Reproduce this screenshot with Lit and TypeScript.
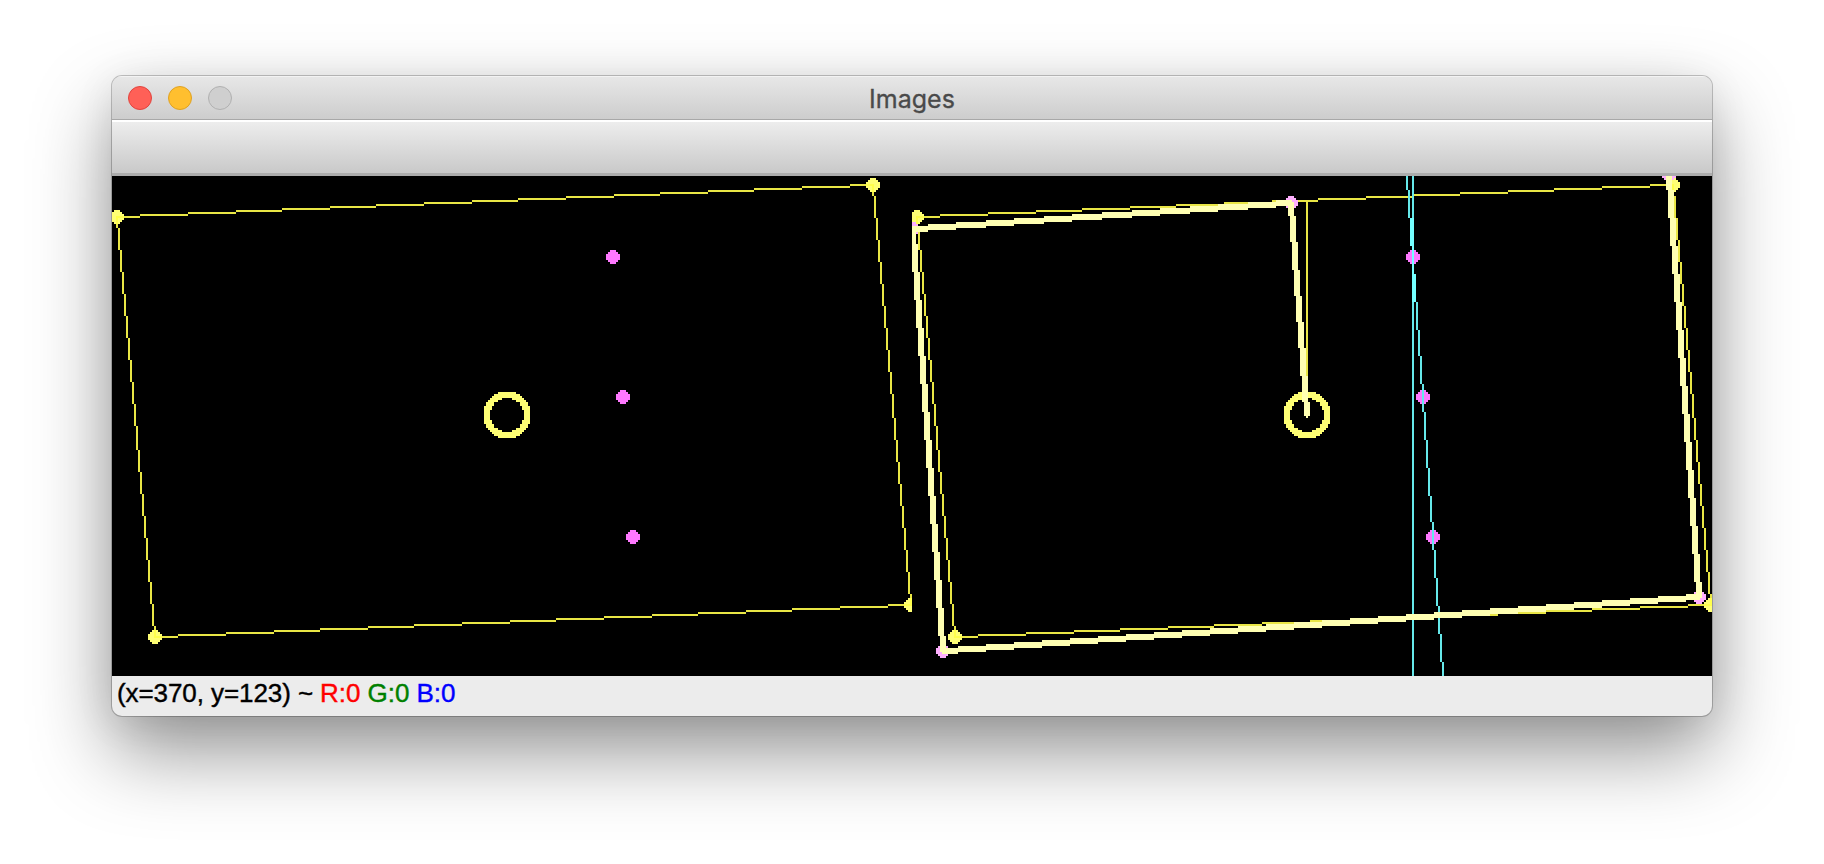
import { LitElement, html, css, svg } from "lit";
import { customElement } from "lit/decorators.js";

type Point = [number, number];

const WIDTH = 800;
const HEIGHT = 250;

/** Horizontal run of cells, clipped to the image between minX and maxX. */
function run(x: number, y: number, w: number, minX = 0, maxX = WIDTH): string {
  const a = Math.max(x, minX);
  const b = Math.min(x + w, maxX);
  if (b <= a || y < 0 || y >= HEIGHT) return "";
  return `M${a} ${y}h${b - a}v1h${a - b}z`;
}

/** One cell wide line. */
function line([x0, y0]: Point, [x1, y1]: Point, minX = 0, maxX = WIDTH): string {
  const steps = Math.max(Math.abs(x1 - x0), Math.abs(y1 - y0));
  let d = "";
  for (let i = 0; i <= steps; i++) {
    const x = Math.floor(x0 + ((x1 - x0) * i) / steps + 0.5);
    const y = Math.floor(y0 + ((y1 - y0) * i) / steps + 0.5);
    d += run(x, y, 1, minX, maxX);
  }
  return d;
}

/** Three cells wide line with small caps on both ends. */
function thick([x0, y0]: Point, [x1, y1]: Point): string {
  const steep = Math.abs(y1 - y0) > Math.abs(x1 - x0);
  let d = "";
  for (const k of [-1, 0, 1]) {
    d += steep
      ? line([x0 + k, y0], [x1 + k, y1], 400)
      : line([x0, y0 + k], [x1, y1 + k], 400);
  }
  for (const [x, y] of [[x0, y0], [x1, y1]]) {
    d += run(x, y - 1, 1, 400) + run(x - 1, y, 3, 400) + run(x, y + 1, 1, 400);
  }
  return d;
}

function dot([cx, cy]: Point, minX = 0, maxX = WIDTH): string {
  const half = [3, 3, 2, 1];
  let d = "";
  for (let dy = -3; dy <= 3; dy++) {
    const h = half[Math.abs(dy)];
    d += run(cx - h, cy + dy, 2 * h + 1, minX, maxX);
  }
  return d;
}

function ring([cx, cy]: Point): string {
  let d = "";
  for (let y = -11; y <= 11; y++)
    for (let x = -11; x <= 11; x++) {
      const r = Math.hypot(x, y);
      if (r > 8.5 && r < 11.8) d += run(cx + x, cy + y, 1);
    }
  return d;
}

const corners: Point[] = [[2, 20], [380, 4], [399, 214], [21, 230]];
const marks: Point[] = [[250, 40], [255, 110], [260, 180]];
const shift = ([x, y]: Point, dx: number): Point => [x + dx, y];

function pane(dx: number) {
  const pts = corners.map((p) => shift(p, dx));
  const sides = pts.map((p, i) => line(p, pts[(i + 1) % 4], dx, dx + 400)).join("");
  const dots = pts.map((p) => dot(p, dx, dx + 400)).join("");
  return svg`
    <clipPath id="dots${dx}"><path d=${dots}></path></clipPath>
    <path class="side" d=${sides}></path>
    <path class="corner" d=${dots}></path>
    <path class="inner" d=${sides} clip-path="url(#dots${dx})"></path>
    <path class="corner" d=${ring([197 + dx, 119])}></path>
    <path class="mark" d=${marks.map((p) => dot(shift(p, dx))).join("")}></path>`;
}

const track: Point[] = [[597, 119], [589, 13], [400, 26], [415, 237], [793, 210], [778, -1]];

@customElement("image-canvas")
export class ImageCanvas extends LitElement {
  static styles = css`
    :host { display: block; height: 500px; background: #000; }
    svg { display: block; width: 1600px; height: 500px; }
    .side { fill: #e9e645; }
    .inner { fill: #ffff4c; }
    .corner { fill: #ffff74; }
    .mark { fill: #ff78ff; }
    .node { fill: #ffb0ff; }
    .track { fill: #ffffb2; }
    .axis { fill: #66e8ea; }
    .cross { fill: #74ffff; }
  `;

  render() {
    const vertical = line([650, 0], [650, 249]);
    const slanted = line([647, 0], [665, 249]);
    return html`<svg viewBox="0 0 800 250" shape-rendering="crispEdges">
      ${pane(0)} ${pane(400)}
      <path class="side" d=${line([597, 13], [597, 119])}></path>
      <path class="axis" d=${vertical + slanted}></path>
      <path class="cross" d=${line([649, 21], [649, 34]) + line([650, 21], [650, 62]) + line([651, 49], [651, 62])}></path>
      <path class="node" d=${track.slice(1).map((p) => dot(p, 400)).join("")}></path>
      <path class="track" d=${track.slice(1).map((p, i) => thick(track[i], p)).join("")}></path>
    </svg>`;
  }
}

@customElement("app-root")
export class AppRoot extends LitElement {
  static styles = css`
    :host {
      display: flex;
      box-sizing: border-box;
      width: 100%;
      height: 864px;
      padding: 76px 112px 0;
      overflow: hidden;
      background: #fff;
    }
    .window {
      display: flex;
      flex-direction: column;
      width: 1600px;
      height: 640px;
      border-radius: 10px;
      overflow: hidden;
      background: #ececec;
      box-shadow: 0 0 0 1px rgba(0, 0, 0, 0.22), 0 36px 80px rgba(0, 0, 0, 0.42), 0 6px 40px rgba(0, 0, 0, 0.08);
    }
    .title {
      display: grid;
      grid-template-columns: 1fr auto 1fr;
      align-items: center;
      box-sizing: border-box;
      height: 44px;
      padding: 0 16px;
      background: linear-gradient(#e7e7e7, #cdcdcd);
      border-top: 1px solid #f3f3f3;
      border-bottom: 1px solid #a8a8a8;
      font: 25px/40px Inter, sans-serif;
      color: #4a4a4a;
    }
    .lights { display: flex; gap: 16px; }
    .light { box-sizing: border-box; width: 24px; height: 24px; border-radius: 50%; border: 1px solid; }
    .close { background: #ff6057; border-color: #e0443e; }
    .minimize { background: #ffbf2f; border-color: #dea123; }
    .zoom { background: #cfcfcf; border-color: #b0b0b0; }
    .name { padding-top: 2px; -webkit-text-stroke: 0.3px currentColor; }
    .toolbar {
      box-sizing: border-box;
      height: 56px;
      background: linear-gradient(#ededed, #c9c9c9);
      border-top: 2px solid #fff;
      border-bottom: 3px solid #acacac;
    }
    .status {
      display: flex;
      gap: 7px;
      padding: 0 5px;
      font: 26px/35px "Liberation Sans", Arial, sans-serif;
      -webkit-text-stroke: 0.4px currentColor;
      color: #000;
      white-space: nowrap;
    }
    .place { letter-spacing: -0.08px; }
    .red { color: #f00; }
    .green { color: #008000; }
    .blue { color: #00f; }
  `;

  render() {
    return html`<div class="window">
      <div class="title">
        <div class="lights">
          <span class="light close"></span><span class="light minimize"></span><span class="light zoom"></span>
        </div>
        <span class="name">Images</span>
      </div>
      <div class="toolbar"></div>
      <image-canvas></image-canvas>
      <div class="status">
        <span class="place">(x=370, y=123) ~</span><span class="red">R:0</span><span class="green">G:0</span><span class="blue">B:0</span>
      </div>
    </div>`;
  }
}
